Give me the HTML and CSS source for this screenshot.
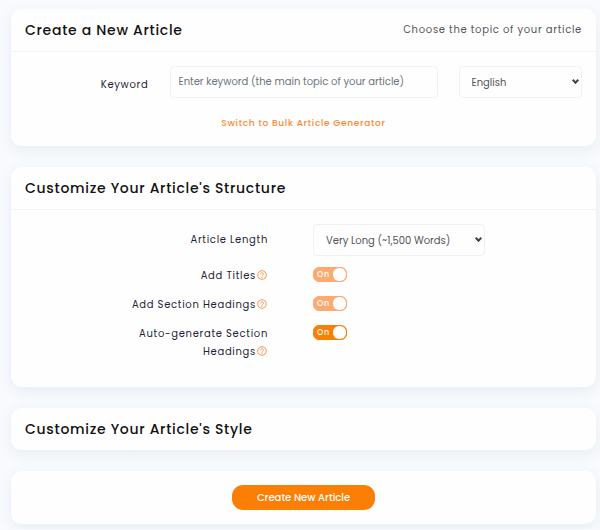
FILE: index.html
```html
<!DOCTYPE html>
<html lang="en">
<head>
<meta charset="utf-8">
<meta name="viewport" content="width=device-width, initial-scale=1">
<title>Create a New Article</title>
<link rel="stylesheet" href="styles.css">
</head>
<body>
<svg class="defs" aria-hidden="true">
  <symbol id="help" viewBox="0 0 20 20">
    <circle cx="10" cy="10" r="8.6" fill="none" stroke="currentColor" stroke-width="2"/>
    <path d="M7.2 8.2a2.8 2.8 0 1 1 4.2 2.4c-.9.5-1.4 1-1.4 2" fill="none" stroke="currentColor" stroke-width="1.8" stroke-linecap="round"/>
    <circle cx="10" cy="15" r="1.1" fill="currentColor"/>
  </symbol>
</svg>
<form class="page">
  <section class="card">
    <header class="card-header">
      <h2>Create a New Article</h2>
      <p>Choose the topic of your article</p>
    </header>
    <div class="card-body">
      <div class="topic-row">
        <label class="label" for="keyword">Keyword</label>
        <input class="control" id="keyword" type="text" placeholder="Enter keyword (the main topic of your article)">
        <span class="select"><select class="control" aria-label="Language"><option>English</option></select></span>
      </div>
      <a class="bulk-link" href="#">Switch to Bulk Article Generator</a>
    </div>
  </section>

  <section class="card">
    <header class="card-header">
      <h2>Customize Your Article's Structure</h2>
    </header>
    <div class="card-body options">
      <div class="option-row">
        <label class="label" for="length">Article Length</label>
        <span class="select length"><select class="control" id="length"><option>Very Long (~1,500 Words)</option></select></span>
      </div>
      <div class="option-row">
        <label class="label" for="titles">Add Titles<svg class="help"><use href="#help"/></svg></label>
        <span class="switch"><input type="checkbox" id="titles" checked disabled><span class="state">On</span></span>
      </div>
      <div class="option-row">
        <label class="label" for="headings">Add Section Headings<svg class="help"><use href="#help"/></svg></label>
        <span class="switch"><input type="checkbox" id="headings" checked disabled><span class="state">On</span></span>
      </div>
      <div class="option-row">
        <label class="label" for="auto">Auto-generate Section Headings<svg class="help"><use href="#help"/></svg></label>
        <span class="switch"><input type="checkbox" id="auto" checked><span class="state">On</span></span>
      </div>
    </div>
  </section>

  <section class="card">
    <header class="card-header">
      <h2>Customize Your Article's Style</h2>
    </header>
  </section>

  <section class="card actions">
    <button class="submit" type="button">Create New Article</button>
  </section>
</form>
</body>
</html>
```
FILE: styles.css
```css
* {
  box-sizing: border-box;
}

body {
  margin: 0;
  background: #f8fafd;
  color: #1f1f38;
  font-family: Poppins, Inter, sans-serif;
  font-size: 10px;
  line-height: 18px;
  letter-spacing: 0.07em;
}

h2,
p {
  margin: 0;
}

.defs {
  position: absolute;
  width: 0;
  height: 0;
}

.page {
  display: flex;
  flex-direction: column;
  gap: 21px;
  padding: 9px 4px 5px 11px;
}

.card {
  background: #fefefe;
  border-radius: 11px;
  box-shadow: 0 4px 14px rgba(70, 110, 140, 0.09);
}

.card-header {
  display: flex;
  align-items: center;
  justify-content: space-between;
  padding: 12px 14px;
}

.card-header:not(:last-child) {
  border-bottom: 1px solid #f1f2f4;
}

.card-header h2 {
  color: #111;
  font-size: 14px;
  font-weight: 500;
  line-height: 18px;
}

.card-header p {
  color: #555;
}

.card-body {
  padding: 14px;
}

.topic-row {
  display: grid;
  grid-template-columns: repeat(12, 1fr);
  column-gap: 21px;
  align-items: center;
}

.topic-row > * {
  grid-column: span 3;
}

.topic-row > input {
  grid-column: span 6;
}

.label {
  text-align: right;
}

.topic-row .label {
  padding-top: 5px;
}

.control {
  width: 100%;
  min-width: 0;
  height: 32px;
  padding: 0 8px;
  border: 1px solid #f0f1f3;
  border-radius: 4px;
  background: #fefefe;
  color: #555;
  font-family: inherit;
  font-size: 10px;
}

.control::placeholder {
  color: #6c757d;
  opacity: 1;
}

.select {
  display: grid;
  position: relative;
}

.select .control {
  padding: 0 18px 0 12px;
  appearance: none;
}

.select::after {
  position: absolute;
  top: 12px;
  right: 4px;
  width: 3px;
  height: 3px;
  border: solid #444;
  border-width: 0 2px 2px 0;
  transform: rotate(45deg);
  content: "";
  pointer-events: none;
}

.bulk-link {
  display: block;
  margin: 16px 0 0;
  color: #f98a35;
  font-size: 9px;
  font-weight: 500;
  text-align: center;
  text-decoration: none;
}

.options {
  display: grid;
  row-gap: 11px;
  padding-bottom: 26px;
}

.option-row {
  display: grid;
  grid-template-columns: 243fr 269fr;
  column-gap: 45px;
}

.option-row .label {
  justify-self: end;
  max-width: 150px;
}

.option-row:first-child {
  align-items: center;
}

.length {
  width: 172px;
}

.help {
  width: 10px;
  height: 10px;
  margin: 0 1px;
  color: #fb9450;
  vertical-align: -1px;
}

.switch {
  position: relative;
  justify-self: start;
  width: 34px;
  height: 15px;
}

.switch input {
  display: flex;
  justify-content: flex-end;
  width: 100%;
  height: 100%;
  margin: 0;
  border: 1px solid #fb7e05;
  border-radius: 6px;
  background: #fb7e05;
  appearance: none;
}

.switch input::before {
  width: 13px;
  height: 13px;
  border-radius: 6px;
  background: #fff;
  content: "";
}

.switch input:disabled {
  border-color: #fbaa72;
  background: #fbaa72;
}

.state {
  position: absolute;
  top: 0;
  left: 4px;
  color: #fff;
  font-size: 8px;
  font-weight: 500;
  line-height: 15px;
  pointer-events: none;
}

.actions {
  display: flex;
  justify-content: center;
  padding: 14px;
}

.submit {
  height: 25px;
  padding: 0 25px;
  border: 0;
  border-radius: 11px;
  background: #fb7e05;
  color: #fff;
  font-family: inherit;
  font-size: 10px;
  font-weight: 500;
}
```
